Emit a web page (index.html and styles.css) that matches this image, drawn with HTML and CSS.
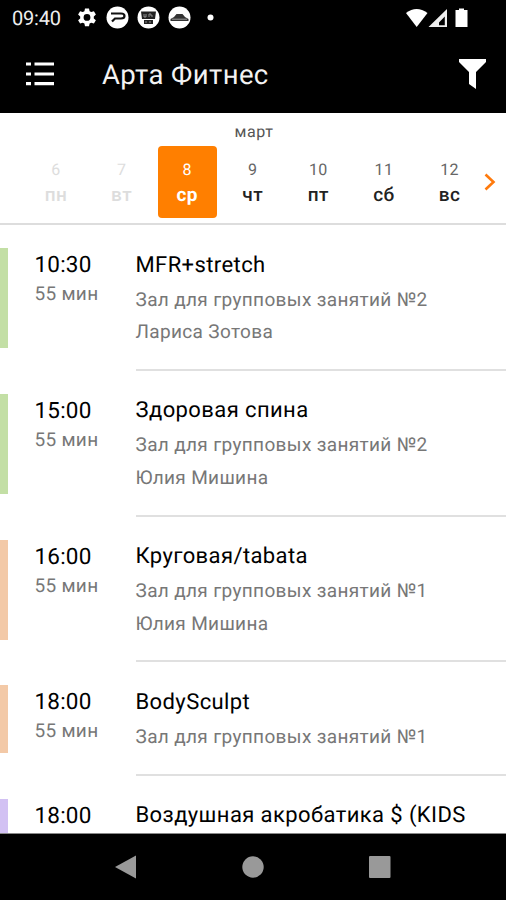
FILE: index.html
```html
<!DOCTYPE html>
<html lang="ru">
<head>
<meta charset="utf-8">
<title>Арта Фитнес</title>
<link rel="stylesheet" href="styles.css">
</head>
<body>
<div class="screen">
  <div class="status">
    <span class="clock">09:40</span>
    <svg class="notices" width="145" height="24" viewBox="0 0 145 24">
      <g fill="#fff">
        <path fill-rule="evenodd" d="M9 2.5h4l.6 2.7 1.6.9 2.7-.9 2 3.4-2.1 1.8v2l2.1 1.8-2 3.4-2.7-.9-1.6.9-.6 2.7H9l-.6-2.7-1.6-.9-2.7.9-2-3.4 2.100-1.800v-2L2.100 8.600l2-3.400 2.700.9 1.600-.9zM11 8a3.400 3.400 0 1 0 0 6.800A3.400 3.400 0 0 0 11 8z"/>
        <circle cx="41.500" cy="11.500" r="11"/>
        <circle cx="72.500" cy="11.500" r="11"/>
        <circle cx="103.500" cy="11.500" r="11"/>
        <circle cx="134.500" cy="11.500" r="3"/>
      </g>
      <path d="M35 7.500h10q3.500 0 3.500 2.500t-3.500 2.500h-6l-3 3" fill="none" stroke="#111" stroke-width="2.200"/>
      <path d="M65 5.500h15l-1 7.500H66zM68 14h9v4h-9z" fill="#222"/>
      <path d="M68 8v3h2V8m3 3V8h2v2h2M69 16h2m2 0h2" fill="none" stroke="#aaa" stroke-width=".8"/>
      <path d="M94.500 13l3.500-2 2.500-3h6l2.500 3 3.500 2v2h-18z" fill="#333"/>
      <path d="M96 13.200h15" stroke="#999" stroke-width="1"/>
    </svg>
    <svg class="signals" width="64" height="22" viewBox="0 0 64 22">
      <path d="M0 5Q10.500-3 21.500 5L10.700 19z" fill="#fff"/>
      <path fill-rule="evenodd" d="M41 1v18H22.500zM38.800 8.500L33 14.500v2.700h5.800z" fill="#eee"/>
      <path d="M53 .5h5v1.500h3.500V19h-12V2H53z" fill="#fff"/>
    </svg>
  </div>
  <header class="bar">
    <svg class="menu" width="30" height="26" viewBox="0 0 30 26">
      <path d="M1 3h5M9.500 3H29M1 13h5M9.500 13H29M1 22.700h5M9.500 22.700H29" stroke="#fff" stroke-width="3.200"/>
    </svg>
    <h1>Арта Фитнес</h1>
    <svg class="filter" width="27" height="31" viewBox="0 0 27 31">
      <path d="M0 0h27v3L17 13v17l-7-5V13L0 3z" fill="#fff"/>
    </svg>
  </header>
  <section class="calendar">
    <div class="month">март</div>
    <div class="week">
      <div class="day past"><span>6</span><b>пн</b></div>
      <div class="day past"><span>7</span><b>вт</b></div>
      <div class="day active"><span>8</span><b>ср</b></div>
      <div class="day"><span>9</span><b>чт</b></div>
      <div class="day"><span>10</span><b>пт</b></div>
      <div class="day"><span>11</span><b>сб</b></div>
      <div class="day"><span>12</span><b>вс</b></div>
      <svg class="next" width="12" height="18" viewBox="0 0 12 18"><path d="M1.500 1.500L9.500 9l-8 7.500" fill="none" stroke="#ff7a0c" stroke-width="2.600"/></svg>
    </div>
  </section>
  <main class="list">
    <article class="row">
      <i class="strip green"></i>
      <div class="when"><p class="time">10:30</p><p class="span">55 мин</p></div>
      <div class="what"><h2>MFR+stretch</h2><p>Зал для групповых занятий №2</p><p>Лариса Зотова</p></div>
    </article>
    <article class="row">
      <i class="strip green"></i>
      <div class="when"><p class="time">15:00</p><p class="span">55 мин</p></div>
      <div class="what"><h2>Здоровая спина</h2><p>Зал для групповых занятий №2</p><p>Юлия Мишина</p></div>
    </article>
    <article class="row">
      <i class="strip peach"></i>
      <div class="when"><p class="time">16:00</p><p class="span">55 мин</p></div>
      <div class="what"><h2>Круговая/tabata</h2><p>Зал для групповых занятий №1</p><p>Юлия Мишина</p></div>
    </article>
    <article class="row">
      <i class="strip peach"></i>
      <div class="when"><p class="time">18:00</p><p class="span">55 мин</p></div>
      <div class="what"><h2>BodySculpt</h2><p>Зал для групповых занятий №1</p></div>
    </article>
    <article class="row">
      <i class="strip violet"></i>
      <div class="when"><p class="time">18:00</p></div>
      <div class="what"><h2>Воздушная акробатика $ (KIDS</h2></div>
    </article>
  </main>
  <nav class="nav">
    <svg width="22" height="24" viewBox="0 0 22 24"><path d="M0 12L21 .5v23z" fill="#999"/></svg>
    <svg width="22" height="22" viewBox="0 0 22 22"><circle cx="11" cy="11" r="10.700" fill="#999"/></svg>
    <svg width="22" height="22" viewBox="0 0 22 22"><rect width="21.500" height="22" rx="1" fill="#999"/></svg>
  </nav>
</div>
</body>
</html>
```
FILE: styles.css
```css
* { box-sizing: border-box; margin: 0; padding: 0; }
body { width: 506px; height: 900px; overflow: hidden; background: #fff; font-family: Roboto, "Liberation Sans", sans-serif; color: #111; text-rendering: geometricPrecision; }
.screen { display: flex; flex-direction: column; height: 900px; }
svg { display: block; flex: none; }

.status { display: flex; height: 36px; flex: none; background: #000; color: #eee; padding-left: 12px; }
.clock { width: 64px; font-size: 20px; line-height: 36px; letter-spacing: -.2px; }
.notices { margin-top: 6px; }
.signals { margin: 8px 36px 0 auto; }

.bar { display: flex; height: 77px; flex: none; background: #000; color: #f3f3f3; padding-left: 25px; }
.menu { margin-top: 24.500px; }
.bar h1 { margin-left: 47px; font-size: 27.500px; font-weight: 400; line-height: 78px; letter-spacing: .4px; white-space: nowrap; }
.filter { margin: 22.500px 20px 0 auto; }

.calendar { height: 112px; flex: none; border-bottom: 2px solid #ddd; }
.month { height: 33px; padding-left: 2px; text-align: center; font-size: 16px; line-height: 37px; letter-spacing: .6px; color: #555; }
.week { display: flex; padding-left: 26.500px; }
.day { display: flex; flex-direction: column; align-items: center; width: 59px; height: 72px; margin-right: 6.600px; border-radius: 4px; padding-top: 13px; }
.day span { font-size: 16px; line-height: 22px; color: #666; letter-spacing: .4px; }
.day b { font-size: 19px; line-height: 27px; font-weight: 500; letter-spacing: .5px; color: #222; }
.day.past span, .day.past b { color: #ddd; }
.day.active { background: #ff7f00; }
.day.active span, .day.active b { color: #fff; }
.day.active b { font-weight: 700; }
.next { margin: 27px 0 0 -1.500px; }

.list { flex: 1; min-height: 0; overflow: hidden; border-bottom: 1px solid #888; }
.row { display: flex; }
.strip { width: 7.500px; flex: none; margin: 23px 0 22.500px; }
.green { background: #c3dfa5; }
.peach { background: #f3c9a7; }
.violet { background: #d2c1f3; }
.when { width: 128px; flex: none; padding: 25px 0 0 27px; }
.time { font-size: 22.500px; line-height: 30px; letter-spacing: .2px; color: #000; }
.span { font-size: 19px; line-height: 27px; letter-spacing: .3px; color: #777; }
.what { flex: 1; padding: 25.500px 0 20.300px; border-bottom: 2px solid #e0e0e0; white-space: nowrap; }
.what h2 { font-size: 22px; font-weight: 400; line-height: 30px; letter-spacing: .4px; margin-bottom: 3px; color: #000; }
.what p { font-size: 19px; line-height: 32.500px; letter-spacing: .35px; color: #777; }

.nav { display: flex; justify-content: center; align-items: center; gap: 105px; height: 66px; flex: none; background: #000; }
```
